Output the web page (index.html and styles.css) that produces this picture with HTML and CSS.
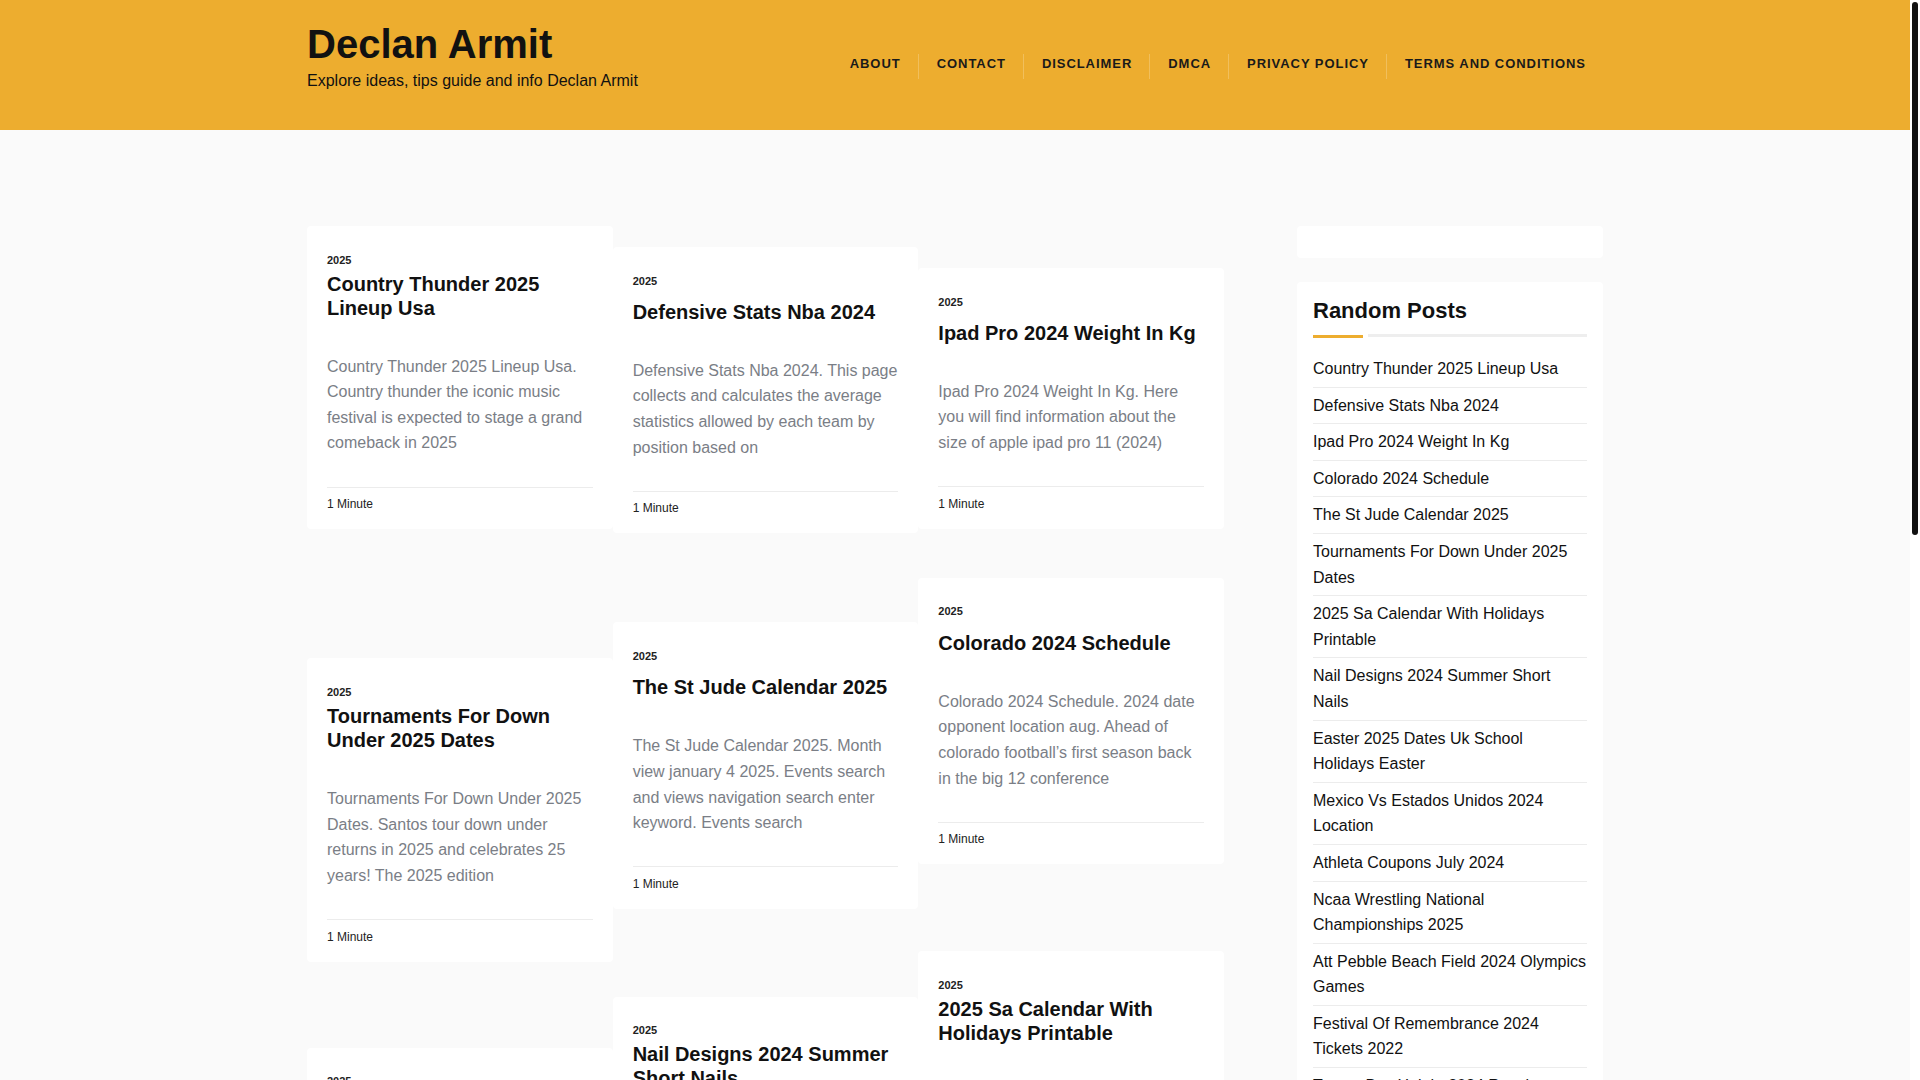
FILE: index.html
```html
<!DOCTYPE html>
<html lang="en">
<head>
<meta charset="utf-8">
<title>Declan Armit</title>
<link rel="stylesheet" href="styles.css">
</head>
<body>
<div class="page">
  <header class="site-header">
    <div class="container header-inner">
      <div class="branding">
        <h1 class="site-title">Declan Armit</h1>
        <p class="site-tagline">Explore ideas, tips guide and info Declan Armit</p>
      </div>
      <nav class="main-nav">
        <ul>
          <li><a href="#">About</a></li>
          <li><a href="#">Contact</a></li>
          <li><a href="#">Disclaimer</a></li>
          <li><a href="#">DMCA</a></li>
          <li><a href="#">Privacy Policy</a></li>
          <li><a href="#">Terms and Conditions</a></li>
        </ul>
      </nav>
    </div>
  </header>

  <main class="container content">
    <div class="posts">
      <div class="post-col col-1">
        <article class="card">
          <div class="card-label">2025</div>
          <h2 class="card-title">Country Thunder 2025 Lineup Usa</h2>
          <p class="card-excerpt">Country Thunder 2025 Lineup Usa. Country thunder the iconic music festival is expected to stage a grand comeback in 2025</p>
          <div class="card-meta">1 Minute</div>
        </article>
        <article class="card">
          <div class="card-label">2025</div>
          <h2 class="card-title">Tournaments For Down Under 2025 Dates</h2>
          <p class="card-excerpt">Tournaments For Down Under 2025 Dates. Santos tour down under returns in 2025 and celebrates 25 years! The 2025 edition</p>
          <div class="card-meta">1 Minute</div>
        </article>
        <article class="card">
          <div class="card-label">2025</div>
          <h2 class="card-title">Easter 2025 Dates Uk School Holidays Easter</h2>
          <p class="card-excerpt">Easter 2025 Dates Uk School Holidays Easter. Find the school holiday dates for the easter break across the uk in 2025</p>
          <div class="card-meta">1 Minute</div>
        </article>
      </div>

      <div class="post-col col-2">
        <article class="card card--single">
          <div class="card-label">2025</div>
          <h2 class="card-title">Defensive Stats Nba 2024</h2>
          <p class="card-excerpt">Defensive Stats Nba 2024. This page collects and calculates the average statistics allowed by each team by position based on</p>
          <div class="card-meta">1 Minute</div>
        </article>
        <article class="card card--single">
          <div class="card-label">2025</div>
          <h2 class="card-title">The St Jude Calendar 2025</h2>
          <p class="card-excerpt">The St Jude Calendar 2025. Month view january 4 2025. Events search and views navigation search enter keyword. Events search</p>
          <div class="card-meta">1 Minute</div>
        </article>
        <article class="card">
          <div class="card-label">2025</div>
          <h2 class="card-title">Nail Designs 2024 Summer Short Nails</h2>
          <p class="card-excerpt">Nail Designs 2024 Summer Short Nails. Short nails are perfect for showing off bright summer colours and fun designs</p>
          <div class="card-meta">1 Minute</div>
        </article>
      </div>

      <div class="post-col col-3">
        <article class="card card--single">
          <div class="card-label">2025</div>
          <h2 class="card-title">Ipad Pro 2024 Weight In Kg</h2>
          <p class="card-excerpt">Ipad Pro 2024 Weight In Kg. Here you will find information about the size of apple ipad pro 11 (2024)</p>
          <div class="card-meta">1 Minute</div>
        </article>
        <article class="card card--single">
          <div class="card-label">2025</div>
          <h2 class="card-title">Colorado 2024 Schedule</h2>
          <p class="card-excerpt">Colorado 2024 Schedule. 2024 date opponent location aug. Ahead of colorado football’s first season back in the big 12 conference</p>
          <div class="card-meta">1 Minute</div>
        </article>
        <article class="card">
          <div class="card-label">2025</div>
          <h2 class="card-title">2025 Sa Calendar With Holidays Printable</h2>
          <p class="card-excerpt">2025 Sa Calendar With Holidays Printable. Download a free printable calendar with all public holidays for 2025</p>
          <div class="card-meta">1 Minute</div>
        </article>
      </div>
    </div>

    <aside class="sidebar">
      <section class="widget widget--empty"></section>
      <section class="widget">
        <h3 class="widget-title">Random Posts</h3>
        <div class="widget-rule"><span class="rule-accent"></span><span class="rule-line"></span></div>
        <ul class="post-list">
          <li><a href="#">Country Thunder 2025 Lineup Usa</a></li>
          <li><a href="#">Defensive Stats Nba 2024</a></li>
          <li><a href="#">Ipad Pro 2024 Weight In Kg</a></li>
          <li><a href="#">Colorado 2024 Schedule</a></li>
          <li><a href="#">The St Jude Calendar 2025</a></li>
          <li><a href="#">Tournaments For Down Under 2025 Dates</a></li>
          <li><a href="#">2025 Sa Calendar With Holidays Printable</a></li>
          <li><a href="#">Nail Designs 2024 Summer Short Nails</a></li>
          <li><a href="#">Easter 2025 Dates Uk School Holidays Easter</a></li>
          <li><a href="#">Mexico Vs Estados Unidos 2024 Location</a></li>
          <li><a href="#">Athleta Coupons July 2024</a></li>
          <li><a href="#">Ncaa Wrestling National Championships 2025</a></li>
          <li><a href="#">Att Pebble Beach Field 2024 Olympics Games</a></li>
          <li><a href="#">Festival Of Remembrance 2024 Tickets 2022</a></li>
          <li><a href="#">Tampa Bay Height 2024 Results</a></li>
          <li><a href="#">Oscar Nominations 2025 Date</a></li>
        </ul>
      </section>
    </aside>
  </main>
</div>
<div class="scrollbar"><div class="scrollbar-thumb"></div></div>
</body>
</html>
```

FILE: styles.css
```css
html, body {
  margin: 0;
  padding: 0;
  height: 100%;
  overflow: hidden;
}

body {
  background: #fafafa;
  font-family: "Liberation Sans", Arial, sans-serif;
  color: #111;
}

.page {
  margin-right: 10px;
}

.container {
  width: 1296px;
  margin: 0 auto;
}

/* Header */
.site-header {
  background: #edad2f;
  height: 130px;
  box-sizing: border-box;
  padding-top: 20px;
}

.header-inner {
  display: flex;
  justify-content: space-between;
  align-items: flex-start;
}

.site-title {
  margin: 0;
  font-size: 40px;
  line-height: 48px;
  font-weight: 700;
  color: #111;
}

.site-tagline {
  margin: 1px 0 0;
  font-size: 16px;
  line-height: 24px;
  color: #111;
}

.main-nav ul {
  list-style: none;
  margin: 34px 0 0;
  padding: 0;
  display: flex;
}

.main-nav li {
  border-left: 1px solid rgba(255, 255, 255, 0.22);
  padding: 0 17px 5px 18px;
}

.main-nav li:first-child {
  border-left: 0;
}

.main-nav li:last-child {
  padding-right: 17px;
}

.main-nav a {
  display: block;
  font-size: 13px;
  line-height: 20px;
  font-weight: 700;
  letter-spacing: 0.95px;
  text-transform: uppercase;
  color: #1a1a1a;
  text-decoration: none;
}

/* Content */
.content {
  display: grid;
  grid-template-columns: 917px 306px;
  column-gap: 73px;
  padding-top: 96px;
  align-items: start;
}

.posts {
  display: grid;
  grid-template-columns: repeat(3, 1fr);
}

.post-col {
  display: flex;
  flex-direction: column;
}

.card {
  background: #fff;
  border-radius: 4px;
  padding: 27.5px 20px 16px;
}

.col-1 .card:nth-child(2) { margin-top: 129px; }
.col-1 .card:nth-child(3) { margin-top: 86px; }
.col-2 .card:nth-child(1) { margin-top: 21px; }
.col-2 .card:nth-child(2) { margin-top: 89px; }
.col-2 .card:nth-child(3) { margin-top: 88px; }
.col-3 .card:nth-child(1) { margin-top: 42px; }
.col-3 .card:nth-child(2) { margin-top: 49px; }
.col-3 .card:nth-child(3) { margin-top: 87px; }

.card-label {
  font-size: 11px;
  line-height: 13.2px;
  font-weight: 700;
  color: #222;
}

.card-title {
  margin: 4.8px 0 0;
  font-size: 20px;
  line-height: 24px;
  font-weight: 700;
  color: #111;
}

.card--single .card-title {
  margin-top: 12px;
}

.card-excerpt {
  margin: 34.2px 0 0;
  font-size: 16px;
  line-height: 25.6px;
  color: #7a7e86;
}

.card-meta {
  margin-top: 30.7px;
  border-top: 1px solid #ececec;
  padding-top: 7.5px;
  font-size: 12px;
  line-height: 18px;
  color: #222;
}

/* Sidebar */
.widget {
  background: #fff;
  border-radius: 4px;
  padding: 16px;
}

.widget + .widget {
  margin-top: 24px;
}

.widget-title {
  margin: 0 0 9.6px;
  font-size: 22px;
  line-height: 26.4px;
  font-weight: 700;
  color: #111;
}

.widget-rule {
  display: flex;
  align-items: flex-start;
  height: 4px;
}

.rule-accent {
  width: 50px;
  height: 3px;
  margin-top: 1px;
  background: #edad2f;
}

.rule-line {
  flex: 1;
  height: 3px;
  margin-left: 5px;
  background: #eeeeee;
}

.post-list {
  list-style: none;
  margin: 13px 0 0;
  padding: 0;
}

.post-list li {
  padding: 5px 0;
  border-bottom: 1px solid #ececec;
  font-size: 16px;
  line-height: 25.6px;
}

.post-list a {
  color: #111;
  text-decoration: none;
}

/* Scrollbar overlay */
.scrollbar {
  position: fixed;
  top: 0;
  right: 0;
  width: 10px;
  height: 100%;
  background: #fff;
}

.scrollbar-thumb {
  margin: 2px 0 0 2px;
  width: 6px;
  height: 533px;
  background: #111;
  border-radius: 3px;
}
```
